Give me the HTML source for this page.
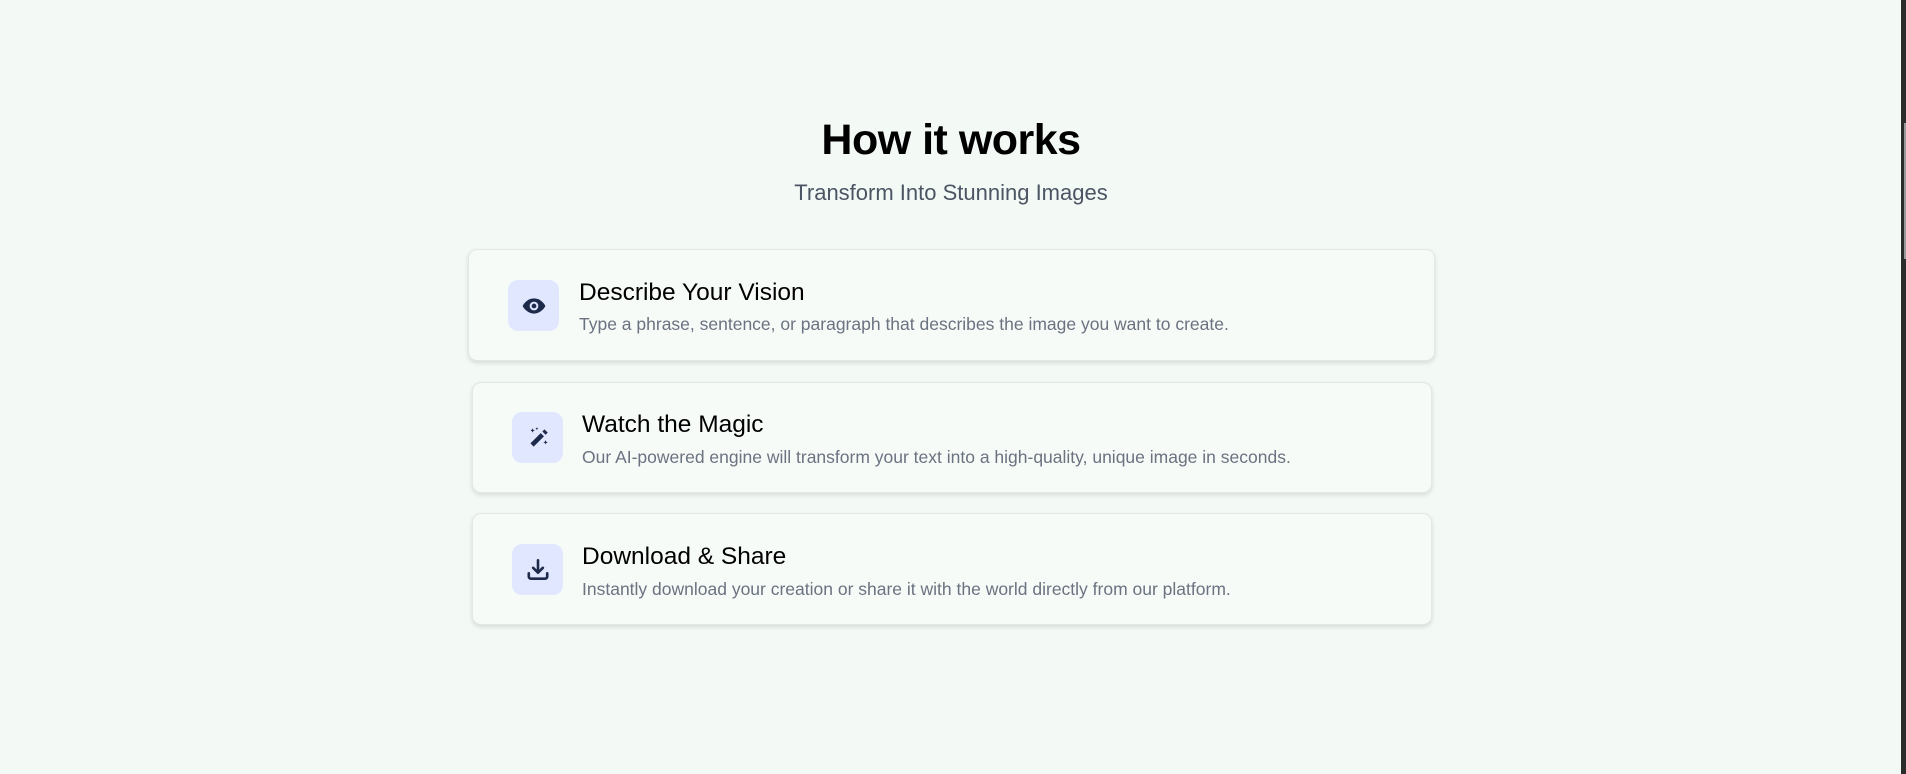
<!DOCTYPE html>
<html><head><style>
html,body{margin:0;padding:0;width:1906px;height:774px;overflow:hidden;background:#f3f9f5;font-family:"Liberation Sans",sans-serif;}
.sb{position:absolute;left:1901px;top:0;width:5px;height:774px;background:#2b2b2b}
.th{position:absolute;left:1904px;top:123px;width:2px;height:136px;background:#9a9a9a}
h1{position:absolute;left:0;width:1902px;text-align:center;top:116px;margin:0;font-size:43px;font-weight:700;color:#000;letter-spacing:-0.5px}
.sub{position:absolute;left:0;width:1902px;text-align:center;top:180px;font-size:22px;color:#4b5563}
.card{position:absolute;background:#f7fbf8;border:1px solid #e3e7e5;border-radius:9px;box-shadow:0 2px 5px rgba(0,0,0,0.12);box-sizing:border-box}
.ic{position:absolute;width:51px;height:51px;border-radius:10px;background:#e0e7ff;display:flex;align-items:center;justify-content:center}
.t{position:absolute;font-size:24.5px;color:#000;white-space:nowrap}
.d{position:absolute;font-size:17.5px;color:#6b7280;white-space:nowrap}
</style></head><body>
<h1>How it works</h1>
<div class="sub">Transform Into Stunning Images</div>

<div class="card" style="left:468px;top:249px;width:967px;height:112px"></div>
<div class="ic" style="left:508px;top:280px"><svg width="26" height="26" viewBox="0 0 24 24"><path d="M12 5C6.5 5 2.7 9.5 1.5 12 2.7 14.5 6.5 19 12 19s9.3-4.5 10.5-7C21.3 9.5 17.5 5 12 5z" fill="#1e2a4a"/><circle cx="12" cy="12" r="4" fill="#e0e7ff"/><circle cx="12" cy="12" r="2.2" fill="#1e2a4a"/></svg></div>
<div class="t" style="left:579px;top:279px">Describe Your Vision</div>
<div class="d" style="left:579px;top:314px">Type a phrase, sentence, or paragraph that describes the image you want to create.</div>

<div class="card" style="left:472px;top:382px;width:960px;height:111px"></div>
<div class="ic" style="left:512px;top:412px"><svg width="26" height="26" viewBox="0 0 24 24" fill="#1e2a4a"><path d="M14.5 7.5l3 3L8 20l-3-3z"/><path d="M16 6l2-2 3 3-2 2z"/><path d="M7 3l.6 1.4L9 5l-1.4.6L7 7l-.6-1.4L5 5l1.4-.6zM19 14l.6 1.4 1.4.6-1.4.6L19 18l-.6-1.4L17 16l1.4-.6zM11 2l.4 1 1 .4-1 .4-.4 1-.4-1-1-.4 1-.4z"/></svg></div>
<div class="t" style="left:582px;top:411px">Watch the Magic</div>
<div class="d" style="left:582px;top:447px">Our AI-powered engine will transform your text into a high-quality, unique image in seconds.</div>

<div class="card" style="left:472px;top:513px;width:960px;height:112px"></div>
<div class="ic" style="left:512px;top:544px"><svg width="26" height="26" viewBox="0 0 24 24" fill="none" stroke="#1e2a4a" stroke-width="2.4" stroke-linecap="round" stroke-linejoin="round"><path d="M12 3v11M7.5 10l4.5 4.5 4.5-4.5"/><path d="M3.5 15v3a2 2 0 0 0 2 2h13a2 2 0 0 0 2-2v-3"/></svg></div>
<div class="t" style="left:582px;top:543px">Download &amp; Share</div>
<div class="d" style="left:582px;top:579px">Instantly download your creation or share it with the world directly from our platform.</div>

<div class="sb"></div><div class="th"></div>
</body></html>
